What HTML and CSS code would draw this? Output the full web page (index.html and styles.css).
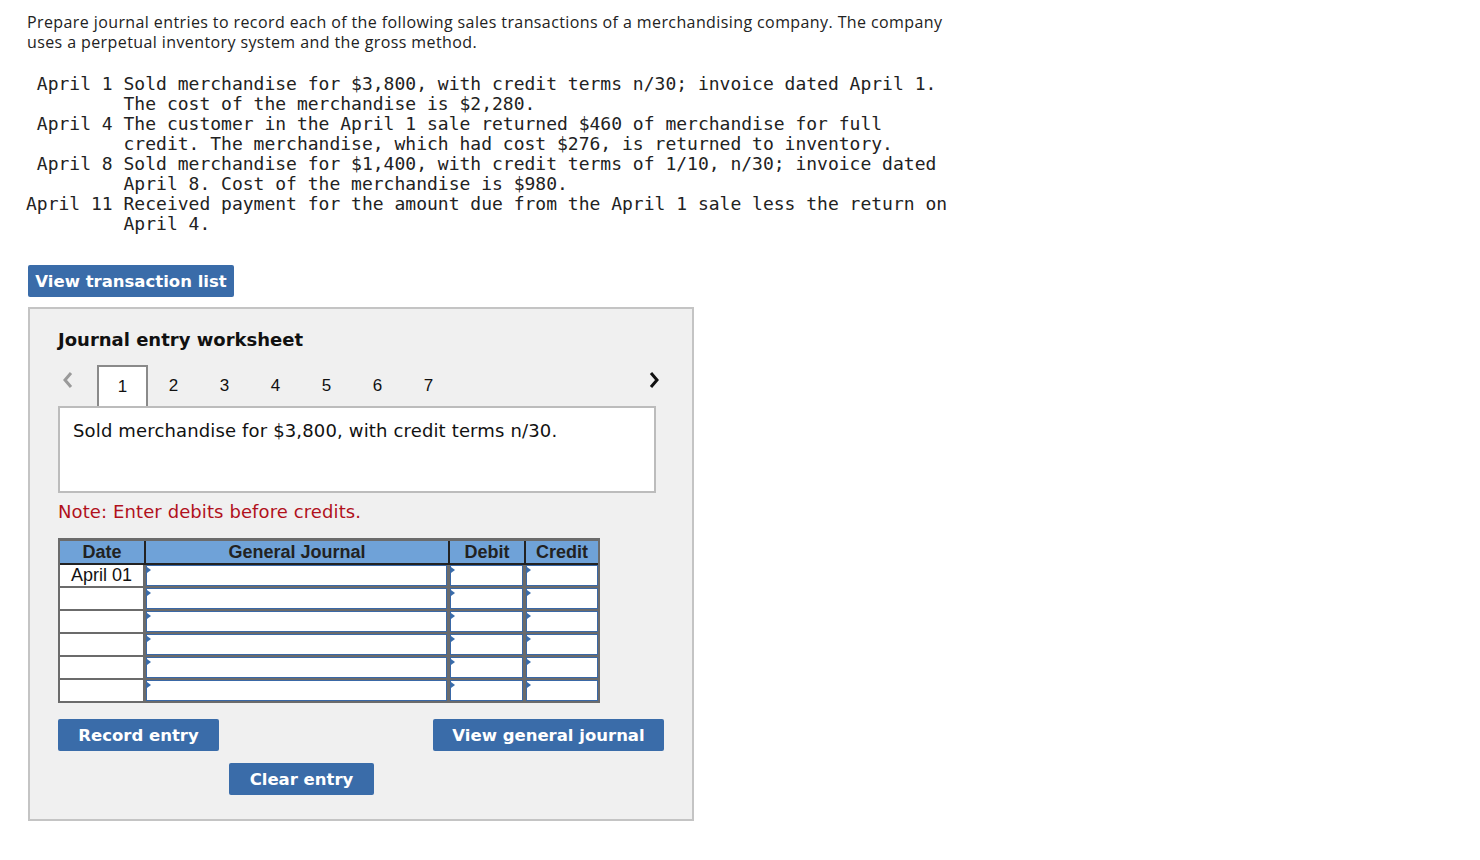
FILE: index.html
```html
<!DOCTYPE html>
<html lang="en">
<head>
    <meta charset="UTF-8">
    <title>Journal entry worksheet</title>
    <link rel="stylesheet" href="styles.css">
</head>
<body>
    <div class="page">
        <p class="intro">Prepare journal entries to record each of the following sales transactions of a merchandising company. The company uses a perpetual inventory system and the gross method.</p>

        <pre class="transactions"> April 1 Sold merchandise for $3,800, with credit terms n/30; invoice dated April 1.
         The cost of the merchandise is $2,280.
 April 4 The customer in the April 1 sale returned $460 of merchandise for full
         credit. The merchandise, which had cost $276, is returned to inventory.
 April 8 Sold merchandise for $1,400, with credit terms of 1/10, n/30; invoice dated
         April 8. Cost of the merchandise is $980.
April 11 Received payment for the amount due from the April 1 sale less the return on
         April 4.</pre>

        <button class="btn btn-list">View transaction list</button>

        <div class="worksheet">
            <h2 class="ws-title">Journal entry worksheet</h2>

            <div class="tabs">
                <span class="arrow arrow-prev">
                    <svg width="14" height="20" viewBox="0 0 14 20"><polyline points="10,3 4,10 10,17" fill="none" stroke="#9a9a9a" stroke-width="3"/></svg>
                </span>
                <span class="tab active">1</span>
                <span class="tab">2</span>
                <span class="tab">3</span>
                <span class="tab">4</span>
                <span class="tab">5</span>
                <span class="tab">6</span>
                <span class="tab">7</span>
                <span class="arrow arrow-next">
                    <svg width="14" height="20" viewBox="0 0 14 20"><polyline points="4,3 10,10 4,17" fill="none" stroke="#111" stroke-width="3"/></svg>
                </span>
            </div>

            <div class="desc">Sold merchandise for $3,800, with credit terms n/30.</div>

            <p class="note">Note: Enter debits before credits.</p>

            <div class="journal">
                <div class="jhead">
                    <div class="hcell">Date</div>
                    <div class="hcell">General Journal</div>
                    <div class="hcell">Debit</div>
                    <div class="hcell">Credit</div>
                </div>
                <div class="jrow">
                    <div class="date">April 01</div>
                    <div class="input"></div>
                    <div class="input"></div>
                    <div class="input"></div>
                </div>
                <div class="jrow">
                    <div class="date"></div>
                    <div class="input"></div>
                    <div class="input"></div>
                    <div class="input"></div>
                </div>
                <div class="jrow">
                    <div class="date"></div>
                    <div class="input"></div>
                    <div class="input"></div>
                    <div class="input"></div>
                </div>
                <div class="jrow">
                    <div class="date"></div>
                    <div class="input"></div>
                    <div class="input"></div>
                    <div class="input"></div>
                </div>
                <div class="jrow">
                    <div class="date"></div>
                    <div class="input"></div>
                    <div class="input"></div>
                    <div class="input"></div>
                </div>
                <div class="jrow">
                    <div class="date"></div>
                    <div class="input"></div>
                    <div class="input"></div>
                    <div class="input"></div>
                </div>
            </div>

            <div class="actions">
                <button class="btn btn-action btn-record">Record entry</button>
                <button class="btn btn-action btn-view">View general journal</button>
            </div>
            <div class="actions-clear">
                <button class="btn btn-action btn-clear">Clear entry</button>
            </div>
        </div>
    </div>
</body>
</html>
```

FILE: styles.css
```css
body {
    margin: 0;
    background: #fff;
    color: #222;
}
.page {
    padding: 12px 27px;
}
.intro {
    margin: 0;
    max-width: 950px;
    font-family: "Open Sans", sans-serif;
    font-size: 16px;
    letter-spacing: 0.4px;
    line-height: 20px;
    color: #222;
}
.transactions {
    margin: 22px 0 31px -1px;
    font-family: "DejaVu Sans Mono", monospace;
    font-size: 18px;
    line-height: 20px;
    color: #222;
}
.btn {
    background-color: #3a6ca9;
    color: #fff;
    border: none;
    border-radius: 2px;
    cursor: pointer;
    padding: 0;
    font-family: "DejaVu Sans", sans-serif;
    font-weight: bold;
}
.btn-list {
    display: block;
    width: 206px;
    height: 32px;
    margin-left: 1px;
    font-size: 16.5px;
}
.worksheet {
    margin-top: 10px;
    margin-left: 1px;
    width: 606px;
    padding: 20px 28px 24px;
    background-color: #f0f0f0;
    border: 2px solid #c4c4c4;
}
.ws-title {
    margin: 0 0 14px;
    font-family: "DejaVu Sans", sans-serif;
    font-weight: bold;
    font-size: 18px;
    line-height: 22px;
    color: #111;
}
.tabs {
    display: flex;
    align-items: stretch;
    height: 41px;
}
.arrow {
    display: flex;
    align-items: flex-start;
    padding-top: 5px;
}
.arrow-prev {
    width: 39px;
    padding-left: 3px;
    box-sizing: border-box;
}
.arrow-next {
    margin-left: auto;
    margin-right: 3px;
}
.tab {
    width: 51px;
    text-align: center;
    font-family: "Liberation Sans", Arial, sans-serif;
    font-size: 17px;
    line-height: 41px;
    color: #111;
}
.tab.active {
    box-sizing: border-box;
    background: #fff;
    border: 2px solid #8a8a8a;
    border-bottom: none;
    line-height: 39px;
}
.desc {
    width: 598px;
    box-sizing: border-box;
    height: 87px;
    background: #fff;
    border: 2px solid #bcbcbc;
    padding: 12px 13px;
    font-family: "DejaVu Sans", sans-serif;
    font-size: 18px;
    letter-spacing: 0.15px;
    line-height: 22px;
    color: #111;
}
.note {
    margin: 8px 0 15px;
    font-family: "DejaVu Sans", sans-serif;
    font-size: 18px;
    letter-spacing: 0.1px;
    line-height: 22px;
    color: #b1111c;
}
.journal {
    width: 538px;
    padding: 3px 2px 2px 2px;
    background: #6b6b6b;
}
.jhead {
    display: grid;
    grid-template-columns: 84px 302px 74px 72px;
    column-gap: 2px;
    background: #222;
    border-bottom: 2px solid #222;
}
.hcell {
    height: 22px;
    background: #6fa2d8;
    text-align: center;
    font-family: "Liberation Sans", Arial, sans-serif;
    font-weight: bold;
    font-size: 18px;
    line-height: 23px;
    color: #222;
}
.jrow {
    display: grid;
    grid-template-columns: 83px 301px 73px 72px;
    column-gap: 3px;
    margin-top: 2px;
}
.jhead + .jrow {
    margin-top: 0;
}
.date {
    height: 21px;
    background: #fff;
    text-align: center;
    font-family: "Liberation Sans", Arial, sans-serif;
    font-size: 18px;
    line-height: 21px;
    color: #111;
}
.input {
    position: relative;
    height: 21px;
    box-sizing: border-box;
    background: #fff;
    border: 1px solid #3a68a6;
}
.input::before {
    content: "";
    position: absolute;
    top: 1px;
    left: 0;
    border-left: 4px solid #3a6ca9;
    border-top: 3px solid transparent;
    border-bottom: 3px solid transparent;
}
.actions {
    display: flex;
    justify-content: space-between;
    margin-top: 16px;
}
.btn-action {
    height: 32px;
    font-size: 16.5px;
}
.btn-record {
    width: 161px;
}
.btn-view {
    width: 231px;
}
.actions-clear {
    margin-top: 12px;
    padding-left: 171px;
}
.btn-clear {
    width: 145px;
}
```
